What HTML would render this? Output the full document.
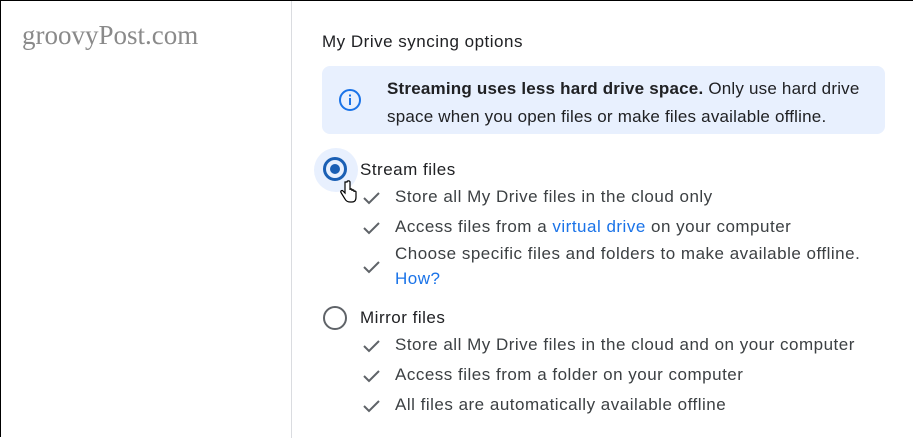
<!DOCTYPE html>
<html><head><style>
body{margin:0;width:914px;height:438px;overflow:hidden;background:#fff;font-family:"Liberation Sans",Arial,sans-serif;position:relative;color:#3c4043}
.frame{position:absolute;left:0;top:0;width:912px;height:436px;border:1px solid #000;border-right:none;border-bottom:none}
.logo{position:absolute;left:22px;top:20px;font-family:"Liberation Serif",serif;font-size:27px;color:#8a8a8a}
.div{position:absolute;left:291px;top:1px;width:1px;height:437px;background:#dadce0}
.t{position:absolute;font-size:17px;letter-spacing:0.5px;white-space:nowrap}
.box{position:absolute;left:322px;top:66px;width:563px;height:68px;background:#e8f0fe;border-radius:8px}
.radio{position:absolute;width:20px;height:20px;border:2px solid #5f6368;border-radius:50%}
a{color:#1a73e8;text-decoration:none}
</style></head><body>
<div class="frame"></div>
<div class="logo">groovyPost.com</div>
<div class="div"></div>
<div class="t" style="left:322px;top:32px;color:#202124">My Drive syncing options</div>
<div class="box"></div>
<svg style="position:absolute;left:338px;top:88px" width="24" height="24" viewBox="0 0 24 24"><circle cx="12" cy="12" r="10" fill="none" stroke="#1a73e8" stroke-width="2"/><rect x="11" y="10" width="2" height="7" fill="#1a73e8"/><rect x="11" y="6.5" width="2" height="2" fill="#1a73e8"/></svg>
<div class="t" style="left:387px;top:75px;line-height:28px;color:#202124;letter-spacing:0.2px"><b>Streaming uses less hard drive space.</b> Only use hard drive<br>space when you open files or make files available offline.</div>
<div style="position:absolute;left:314px;top:148px;width:44px;height:44px;border-radius:50%;background:#e8f0fe"></div>
<div class="radio" style="left:323px;top:157px;border-color:#1a5fb4;border-width:3px;width:18px;height:18px"></div>
<div style="position:absolute;left:330px;top:164px;width:10px;height:10px;border-radius:50%;background:#1a5fb4"></div>
<div class="t" style="left:360px;top:160px;color:#202124">Stream files</div>
<svg style="position:absolute;left:340px;top:180px" width="18" height="24" viewBox="0 0 18 24"><path d="M5 2v11l-2-2c-1-1-3 0-2 1.5L5 19c1 2 3 3 5 3h2c3 0 4-2 4-5v-5c0-1-2-1.5-2 0v-1c0-1.5-2-1.5-2 0v-1c0-1.5-2-1.5-2 0V2c0-1.5-3-1.5-3 0z" fill="#fff" stroke="#000" stroke-width="1.2"/></svg>
<div class="t" style="left:395px;top:187px">Store all My Drive files in the cloud only</div>
<div class="t" style="left:395px;top:217px">Access files from a <a>virtual drive</a> on your computer</div>
<div class="t" style="left:395px;top:244px">Choose specific files and folders to make available offline.</div>
<div class="t" style="left:395px;top:269px"><a>How?</a></div>
<div class="radio" style="left:323px;top:306px"></div>
<div class="t" style="left:360px;top:308px;color:#202124">Mirror files</div>
<div class="t" style="left:395px;top:335px">Store all My Drive files in the cloud and on your computer</div>
<div class="t" style="left:395px;top:365px">Access files from a folder on your computer</div>
<div class="t" style="left:395px;top:395px">All files are automatically available offline</div>
<svg style="position:absolute;left:0;top:0" width="914" height="438">
<g fill="none" stroke="#5f6368" stroke-width="2">
<path d="M364 198l5 5 10-10"/><path d="M364 228l5 5 10-10"/><path d="M364 267l5 5 10-10"/>
<path d="M364 346l5 5 10-10"/><path d="M364 376l5 5 10-10"/><path d="M364 406l5 5 10-10"/>
</g></svg>
</body></html>
